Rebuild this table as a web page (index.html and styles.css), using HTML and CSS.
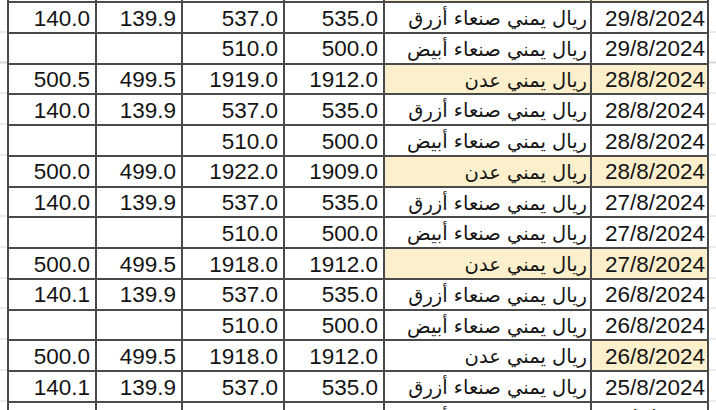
FILE: index.html
```html
<!DOCTYPE html>
<html lang="ar">
<head>
<meta charset="utf-8">
<title>أسعار الصرف</title>
<link rel="stylesheet" href="styles.css">
</head>
<body>
<div class="sheet" dir="rtl">
  <div class="cell date hl"></div><div class="cell name hl"></div><div class="cell num"></div><div class="cell num"></div><div class="cell num"></div><div class="cell num"></div>

  <div class="cell date">29/8/2024</div><div class="cell name">ريال يمني صنعاء أزرق</div><div class="cell num">535.0</div><div class="cell num">537.0</div><div class="cell num">139.9</div><div class="cell num">140.0</div>
  <div class="cell date">29/8/2024</div><div class="cell name">ريال يمني صنعاء أبيض</div><div class="cell num">500.0</div><div class="cell num">510.0</div><div class="cell num"></div><div class="cell num"></div>
  <div class="cell date hl">28/8/2024</div><div class="cell name hl">ريال يمني عدن</div><div class="cell num">1912.0</div><div class="cell num">1919.0</div><div class="cell num">499.5</div><div class="cell num">500.5</div>

  <div class="cell date">28/8/2024</div><div class="cell name">ريال يمني صنعاء أزرق</div><div class="cell num">535.0</div><div class="cell num">537.0</div><div class="cell num">139.9</div><div class="cell num">140.0</div>
  <div class="cell date">28/8/2024</div><div class="cell name">ريال يمني صنعاء أبيض</div><div class="cell num">500.0</div><div class="cell num">510.0</div><div class="cell num"></div><div class="cell num"></div>
  <div class="cell date hl">28/8/2024</div><div class="cell name hl">ريال يمني عدن</div><div class="cell num">1909.0</div><div class="cell num">1922.0</div><div class="cell num">499.0</div><div class="cell num">500.0</div>

  <div class="cell date">27/8/2024</div><div class="cell name">ريال يمني صنعاء أزرق</div><div class="cell num">535.0</div><div class="cell num">537.0</div><div class="cell num">139.9</div><div class="cell num">140.0</div>
  <div class="cell date">27/8/2024</div><div class="cell name">ريال يمني صنعاء أبيض</div><div class="cell num">500.0</div><div class="cell num">510.0</div><div class="cell num"></div><div class="cell num"></div>
  <div class="cell date hl">27/8/2024</div><div class="cell name hl">ريال يمني عدن</div><div class="cell num">1912.0</div><div class="cell num">1918.0</div><div class="cell num">499.5</div><div class="cell num">500.0</div>

  <div class="cell date">26/8/2024</div><div class="cell name">ريال يمني صنعاء أزرق</div><div class="cell num">535.0</div><div class="cell num">537.0</div><div class="cell num">139.9</div><div class="cell num">140.1</div>
  <div class="cell date">26/8/2024</div><div class="cell name">ريال يمني صنعاء أبيض</div><div class="cell num">500.0</div><div class="cell num">510.0</div><div class="cell num"></div><div class="cell num"></div>
  <div class="cell date hl">26/8/2024</div><div class="cell name">ريال يمني عدن</div><div class="cell num">1912.0</div><div class="cell num">1918.0</div><div class="cell num">499.5</div><div class="cell num">500.0</div>

  <div class="cell date">25/8/2024</div><div class="cell name">ريال يمني صنعاء أزرق</div><div class="cell num">535.0</div><div class="cell num">537.0</div><div class="cell num">139.9</div><div class="cell num">140.1</div>
  <div class="cell date">25/8/2024</div><div class="cell name">ريال يمني صنعاء أبيض</div><div class="cell num">500.0</div><div class="cell num">510.0</div><div class="cell num"></div><div class="cell num"></div>
</div>
</body>
</html>
```

FILE: styles.css
```css
html, body {
  margin: 0;
  padding: 0;
  background: #ffffff;
  overflow: hidden;
}

body {
  width: 716px;
  height: 410px;
  background-image: repeating-linear-gradient(
    to bottom,
    #ffffff 0,
    #ffffff 29.75px,
    #d6d6d6 29.75px,
    #d6d6d6 30.75px
  );
  background-position: 0 1.5px;
  font-family: "Liberation Sans", "DejaVu Sans", Arial, sans-serif;
  color: #141414;
}

.sheet {
  display: grid;
  grid-template-columns: 115px 205px 98px 100px 84px 86px;
  grid-auto-rows: 28.75px;
  gap: 2px;
  padding: 2px;
  background: #4a4a4a;
  width: max-content;
  margin-top: -29.75px;
  margin-left: 7px;
}

.cell {
  background: #ffffff;
  display: flex;
  align-items: center;
  justify-content: flex-start;
  font-size: 22.5px;
  line-height: 1;
  white-space: nowrap;
  overflow: hidden;
  padding-top: 3px;
  box-sizing: border-box;
}

.cell.hl {
  background: #fcefcb;
}

.num,
.date {
  direction: ltr;
  justify-content: flex-end;
}

.num {
  padding-right: 5px;
}

.date {
  padding-right: 2px;
}

.name {
  padding-right: 3px;
  font-family: "DejaVu Sans", sans-serif;
  font-size: 19.5px;
}
```
